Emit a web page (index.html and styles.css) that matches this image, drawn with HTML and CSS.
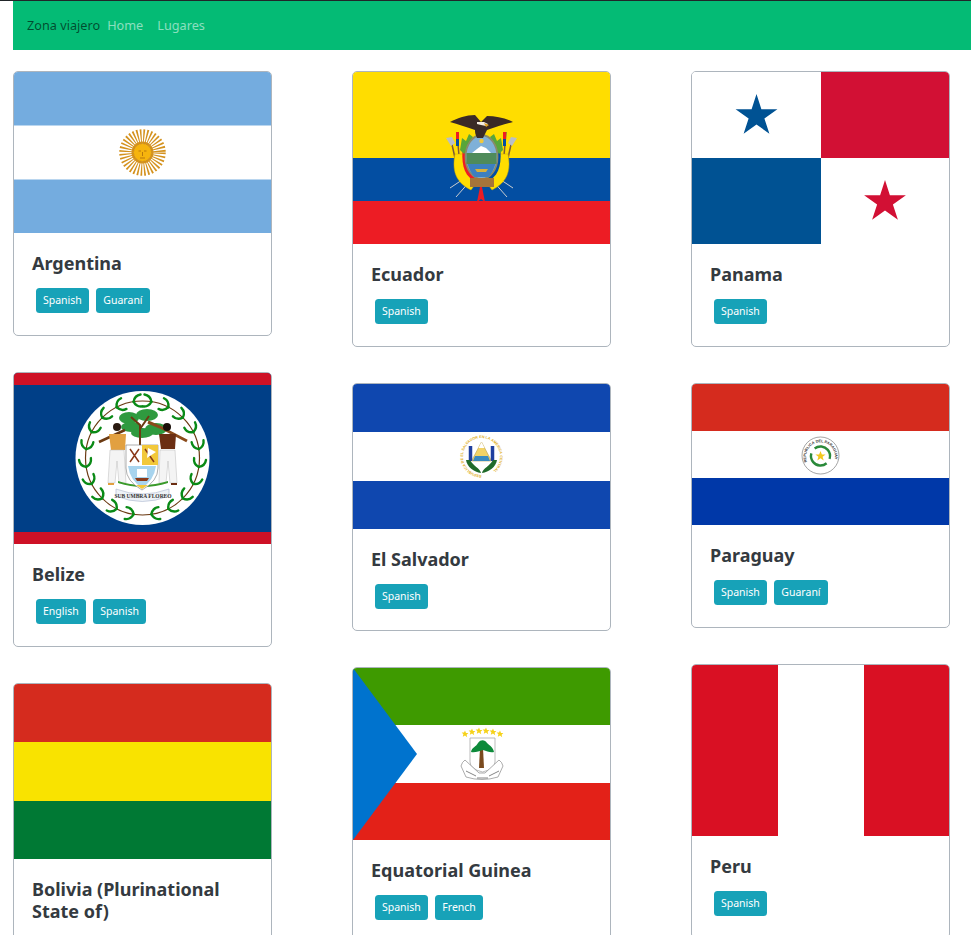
FILE: index.html
```html
<!DOCTYPE html>
<html lang="es">
<head>
    <meta charset="UTF-8">
    <meta name="viewport" content="width=device-width, initial-scale=1.0">
    <title>Zona viajero</title>
    <link rel="stylesheet" href="styles.css">
</head>
<body>
    <nav class="navbar">
        <a href="#" class="brand">Zona viajero</a>
        <a href="#" class="nav-link">Home</a>
        <a href="#" class="nav-link">Lugares</a>
    </nav>

    <main class="country-grid">
        <div class="country-col">
            <!-- Argentina -->
            <div class="card">
                <svg class="flag flag-ar" viewBox="0 0 257 161">
                    <rect width="257" height="161" fill="#74acdf"/>
                    <rect y="53.5" width="257" height="54" fill="#fff"/>
                    <circle cx="128.500" cy="80.500" r="16" fill="none" stroke="#d4921e" stroke-width="14.500" stroke-dasharray="1.300 1.500"/>
                    <circle cx="128.500" cy="80.500" r="10" fill="none" stroke="#d4921e" stroke-width="2"/>
                    <circle cx="128.500" cy="80.500" r="9" fill="#f6b40e" stroke="#c9860f" stroke-width=".7"/>
                    <path d="M124.500 79h2.500M130 79h2.500M128.500 80v4M126 86h5" stroke="#b9790c" stroke-width="1" fill="none"/>
                </svg>
                <div class="card-body">
                    <h5 class="card-title">Argentina</h5>
                    <span class="badge">Spanish</span><span class="badge">Guaraní</span>
                </div>
            </div>

            <!-- Belize -->
            <div class="card">
                <svg class="flag flag-bz" viewBox="0 0 257 171">
                    <defs>
                        <g id="bz-leaf" fill="none" stroke="#0a8a16" stroke-width="2.400" stroke-linecap="round">
                            <path d="M128.500 28q-2-6-8-6"/>
                            <path d="M128.500 28q-2 6-8 6"/>
                        </g>
                        <g id="bz-leaf-l" fill="none" stroke="#0a8a16" stroke-width="2.400" stroke-linecap="round">
                            <path d="M128.500 28q2-6 8-6"/>
                            <path d="M128.500 28q2 6 8 6"/>
                        </g>
                    </defs>
                    <rect width="257" height="171" fill="#003f87"/>
                    <rect width="257" height="12" fill="#ce1126"/>
                    <rect y="159" width="257" height="12" fill="#ce1126"/>
                    <circle cx="128.500" cy="85" r="67" fill="#fff"/>
                    <circle cx="128.500" cy="85" r="57" fill="none" stroke="#6b3a12" stroke-width="1.200"/>
                    <use href="#bz-leaf" transform="rotate(9 128.500 85)"/>
                    <use href="#bz-leaf" transform="rotate(27 128.500 85)"/>
                    <use href="#bz-leaf" transform="rotate(45 128.500 85)"/>
                    <use href="#bz-leaf" transform="rotate(63 128.500 85)"/>
                    <use href="#bz-leaf" transform="rotate(81 128.500 85)"/>
                    <use href="#bz-leaf" transform="rotate(99 128.500 85)"/>
                    <use href="#bz-leaf" transform="rotate(117 128.500 85)"/>
                    <use href="#bz-leaf" transform="rotate(135 128.500 85)"/>
                    <use href="#bz-leaf" transform="rotate(153 128.500 85)"/>
                    <use href="#bz-leaf" transform="rotate(171 128.500 85)"/>
                    <use href="#bz-leaf-l" transform="rotate(189 128.500 85)"/>
                    <use href="#bz-leaf-l" transform="rotate(207 128.500 85)"/>
                    <use href="#bz-leaf-l" transform="rotate(225 128.500 85)"/>
                    <use href="#bz-leaf-l" transform="rotate(243 128.500 85)"/>
                    <use href="#bz-leaf-l" transform="rotate(261 128.500 85)"/>
                    <use href="#bz-leaf-l" transform="rotate(279 128.500 85)"/>
                    <use href="#bz-leaf-l" transform="rotate(297 128.500 85)"/>
                    <use href="#bz-leaf-l" transform="rotate(315 128.500 85)"/>
                    <use href="#bz-leaf-l" transform="rotate(333 128.500 85)"/>
                    <use href="#bz-leaf-l" transform="rotate(351 128.500 85)"/>
                    <!-- tree -->
                    <ellipse cx="115" cy="45" rx="10" ry="6" fill="#2f9a3f"/>
                    <ellipse cx="133" cy="42" rx="11" ry="6" fill="#2f9a3f"/>
                    <ellipse cx="117" cy="54" rx="10" ry="5" fill="#2f9a3f"/>
                    <ellipse cx="142" cy="56" rx="11" ry="6" fill="#2f9a3f"/>
                    <ellipse cx="128" cy="60" rx="11" ry="5" fill="#2f9a3f"/>
                    <path d="M126 72V52l-9-8M126 56l9-13" stroke="#6b3a12" stroke-width="2" fill="none"/>
                    <!-- left man -->
                    <path d="M85 69l26-12" stroke="#6b3a12" stroke-width="2.500"/>
                    <circle cx="103" cy="54" r="4" fill="#2a1a10"/>
                    <path d="M95 61h17l-1 16H97z" fill="#e2a040"/>
                    <path d="M96 77h14l2 33h-7l-2-22-2 22h-7z" fill="#f4f4f4" stroke="#bbb" stroke-width=".5"/>
                    <path d="M94 110h6v2h-6z" fill="#e2a040"/>
                    <!-- right man -->
                    <path d="M134 49l12 5 27 14" stroke="#8a4a1a" stroke-width="3"/>
                    <circle cx="153" cy="54" r="4" fill="#1a0f08"/>
                    <path d="M145 61h17l-1 15h-14z" fill="#6b2e12"/>
                    <path d="M146 77h15l2 33h-7l-2-22-2 22h-7z" fill="#f4f4f4" stroke="#bbb" stroke-width=".5"/>
                    <path d="M157 110h6v2h-6z" fill="#6b2e12"/>
                    <path d="M104 108q24 8 50 0v2q-25 8-50 0z" fill="#3a9a2a"/>
                    <!-- shield -->
                    <path d="M112 72h32v23q0 13-16 22-16-9-16-22z" fill="#fff" stroke="#777" stroke-width=".6"/>
                    <path d="M128 72h16v20h-16z" fill="#f2c83a"/>
                    <path d="M116 76l9 13M125 76l-9 13M131 76l9 13" stroke="#8a3a1a" stroke-width="1.500"/>
                    <path d="M134 75l8 4-9 6z" fill="#fff"/>
                    <path d="M114 93h28q-2 14-14 22-12-8-14-22z" fill="#a8d4ee"/>
                    <path d="M121 105h14l-2 3h-10z" fill="#8a3a1a"/>
                    <path d="M123 96h10v8h-10z" fill="#fff"/>
                    <path d="M122 112h12l-6 4z" fill="#f2c83a"/>
                    <!-- scroll -->
                    <path d="M102 116q26 10 53 0v7q-27 11-53 0z" fill="#eef2f7" stroke="#a8b4cc" stroke-width=".6"/>
                    <text x="129" y="125" class="motto" text-anchor="middle">SUB UMBRA FLOREO</text>
                </svg>
                <div class="card-body">
                    <h5 class="card-title">Belize</h5>
                    <span class="badge">English</span><span class="badge">Spanish</span>
                </div>
            </div>

            <!-- Bolivia -->
            <div class="card">
                <svg class="flag flag-bo" viewBox="0 0 257 175">
                    <rect width="257" height="58.500" fill="#d52b1e"/>
                    <rect y="58" width="257" height="59" fill="#f9e300"/>
                    <rect y="117" width="257" height="58" fill="#007934"/>
                </svg>
                <div class="card-body">
                    <h5 class="card-title">Bolivia (Plurinational State of)</h5>
                    <span class="badge">Spanish</span>
                </div>
            </div>
        </div>

        <div class="country-col">
            <!-- Ecuador -->
            <div class="card">
                <svg class="flag flag-ec" viewBox="0 0 257 172">
                    <rect width="257" height="86" fill="#ffdd00"/>
                    <rect y="86" width="257" height="43" fill="#034ea2"/>
                    <rect y="129" width="257" height="43" fill="#ed1c24"/>
                    <!-- lances -->
                    <path d="M98 68l4 18M104 60l2 24M159 68l-4 18M153 60l-2 24" stroke="#7a5a3a" stroke-width="1.500"/>
                    <path d="M103 60h3v12h-3zM150 60h3v12h-3z" fill="#ed1c24"/>
                    <path d="M103 67h3v7h-3zM150 67h3v7h-3z" fill="#034ea2"/>
                    <path d="M93 66l6-1 3 6-4 3zM164 66l-6-1-3 6 4 3z" fill="#b9bfc6"/>
                    <path d="M118 108l-15 17M112 106l-15 10M139 108l15 17M145 106l15 10" stroke="#c9ccd0" stroke-width="1"/>
                    <!-- side drapes -->
                    <path d="M102 82c-3 16 0 28 16 36l6-8c-9-5-13-14-12-28z" fill="#ffdd00" stroke="#c9a800" stroke-width=".5"/>
                    <path d="M155 82c3 16 0 28-16 36l-6-8c9-5 13-14 12-28z" fill="#ffdd00" stroke="#c9a800" stroke-width=".5"/>
                    <path d="M110 72c-2 18 0 30 10 36l3-3c-7-6-9-16-8-33z" fill="#ed1c24"/>
                    <path d="M147 72c2 18 0 30-10 36l-3-3c7-6 9-16 8-33z" fill="#034ea2"/>
                    <!-- palm and laurel -->
                    <path d="M107 78l2-12 4 3 3-7 4 3-4 9-5 8z" fill="#58a63a"/>
                    <path d="M150 78l-2-12-4 3-3-7-4 3 4 9 5 8z" fill="#58a63a"/>
                    <!-- oval -->
                    <ellipse cx="128.500" cy="85" rx="16" ry="22" fill="#7fb0d8" stroke="#8a8a6a" stroke-width="1.800"/>
                    <path d="M119 81l5-4 4-3 5 2 5 5z" fill="#fff"/>
                    <path d="M113.500 81h30v11h-30z" fill="#4f8b5a"/>
                    <path d="M114.500 92h28q-3 9-7 13h-14q-4-4-7-13z" fill="#3d7fc0"/>
                    <path d="M122 97h13l-2 3h-9z" fill="#d8b13a"/>
                    <circle cx="128.500" cy="69" r="2.200" fill="#f2c83a"/>
                    <!-- fasces and ribbon -->
                    <path d="M117 106h24v9h-24z" fill="#a6743a"/>
                    <path d="M127 115l-3 15 4-3 4 3-3-15z" fill="#ed1c24"/>
                    <!-- condor -->
                    <path d="M97 50c8-4 16-7 25-7l6 7 6-6c9 0 18 2 26 6-8 2-17 5-26 8l-4 8h-6c-2-4-2-6-2-8-9-3-17-6-25-8z" fill="#3a2a26"/>
                    <path d="M124 50h7l4 2-2 2-5-1-4-1z" fill="#f4ece0"/>
                    <path d="M131 51l5 2-3 2z" fill="#e0a020"/>
                </svg>
                <div class="card-body">
                    <h5 class="card-title">Ecuador</h5>
                    <span class="badge">Spanish</span>
                </div>
            </div>

            <!-- El Salvador -->
            <div class="card card-sv">
                <svg class="flag flag-sv" viewBox="0 0 257 145">
                    <defs>
                        <path id="sv-ring" d="M128.500 91a18.500 18.500 0 1 1 .01 0z"/>
                    </defs>
                    <rect width="257" height="145" fill="#0f47af"/>
                    <rect y="48" width="257" height="49" fill="#fff"/>
                    <text class="seal-text seal-sv"><textPath href="#sv-ring">REPUBLICA DE EL SALVADOR EN LA AMERICA CENTRAL</textPath></text>
                    <path d="M128.500 58l10 19h-20z" fill="#f2d265" stroke="#b9a04a" stroke-width=".6"/>
                    <path d="M128.500 58l3 6h-6z" fill="#fff"/>
                    <path d="M122 72h13l2 5h-17z" fill="#3a8ac0"/>
                    <path d="M117.500 62v15M139.500 62v15" stroke="#1f3f9f" stroke-width="3.500"/>
                    <path d="M113 76c1 7 8 12 15 13-1-5-8-7-11-13zM144 76c-1 7-8 12-15 13 1-5 8-7 11-13z" fill="#1f6a2a"/>
                </svg>
                <div class="card-body">
                    <h5 class="card-title">El Salvador</h5>
                    <span class="badge">Spanish</span>
                </div>
            </div>

            <!-- Equatorial Guinea -->
            <div class="card">
                <svg class="flag flag-gq" viewBox="0 0 257 172">
                    <defs>
                        <path id="gq-star" d="M0-3.500l1 2.400 2.400.2-1.800 1.600.6 2.500L0 1.400l-2.200 1.300.6-2.500-1.800-1.600 2.400-.2z" fill="#f6d21a"/>
                    </defs>
                    <rect width="257" height="58" fill="#3e9a00"/>
                    <rect y="57" width="257" height="58" fill="#fff"/>
                    <rect y="115" width="257" height="57" fill="#e32118"/>
                    <path d="M0 0l64 86L0 172z" fill="#0073ce"/>
                    <use href="#gq-star" x="112" y="66"/>
                    <use href="#gq-star" x="119" y="64"/>
                    <use href="#gq-star" x="126" y="63"/>
                    <use href="#gq-star" x="133" y="63"/>
                    <use href="#gq-star" x="140" y="64"/>
                    <use href="#gq-star" x="147" y="66"/>
                    <path d="M117 70h25v24q0 7-12.500 10-12.500-3-12.500-10z" fill="#fff" stroke="#aaa" stroke-width=".8"/>
                    <path d="M126 100l1-20h3l1 20z" fill="#7a4a1e"/>
                    <path d="M118 84c1-5 5-5 7-9 3-4 7-3 9 0 3 3 6 4 7 9-4 1-7-1-11-2-4 1-8 3-12 2z" fill="#0d8a3a"/>
                    <path d="M108 98q1-4 4-6l14 13h6l14-13q3 2 4 6l-5 11q-16 5-32 0z" fill="#fff" stroke="#888" stroke-width=".7"/>
                    <path d="M113 103l10 5M146 103l-10 5M124 110h11" stroke="#666" stroke-width=".8"/>
                </svg>
                <div class="card-body">
                    <h5 class="card-title">Equatorial Guinea</h5>
                    <span class="badge">Spanish</span><span class="badge">French</span>
                </div>
            </div>
        </div>

        <div class="country-col">
            <!-- Panama -->
            <div class="card">
                <svg class="flag flag-pa" viewBox="0 0 257 172">
                    <rect width="257" height="172" fill="#fff"/>
                    <rect x="129" width="128" height="86" fill="#d21034"/>
                    <rect y="86" width="129" height="86" fill="#005293"/>
                    <path d="M64.500 22l4.900 15.200h16l-13 9.400 5 15.200-12.900-9.400-12.900 9.400 5-15.200-13-9.400h16z" fill="#005293"/>
                    <path d="M193 108l4.900 15.200h16l-13 9.400 5 15.200-12.900-9.400-12.900 9.400 5-15.200-13-9.400h16z" fill="#d21034"/>
                </svg>
                <div class="card-body">
                    <h5 class="card-title">Panama</h5>
                    <span class="badge">Spanish</span>
                </div>
            </div>

            <!-- Paraguay -->
            <div class="card">
                <svg class="flag flag-py" viewBox="0 0 257 141">
                    <defs>
                        <path id="py-ring" d="M115 78a14.500 14.500 0 1 1 27 0"/>
                    </defs>
                    <rect width="257" height="47" fill="#d52b1e"/>
                    <rect y="47" width="257" height="47" fill="#fff"/>
                    <rect y="94" width="257" height="47" fill="#0038a8"/>
                    <circle cx="128.500" cy="71.500" r="18.500" fill="#fff" stroke="#666" stroke-width=".6"/>
                    <text class="seal-text seal-py"><textPath href="#py-ring">REPUBLICA DEL PARAGUAY</textPath></text>
                    <circle cx="128.500" cy="72" r="9.500" fill="#fff" stroke="#2a8a3a" stroke-width="2.400" stroke-dasharray="24 6" transform="rotate(50 128.500 72)"/>
                    <path d="M128.500 67l1.400 3.500h3.700l-3 2.300 1.100 3.600-3.200-2.100-3.200 2.100 1.100-3.600-3-2.300h3.700z" fill="#f2c81e"/>
                </svg>
                <div class="card-body">
                    <h5 class="card-title">Paraguay</h5>
                    <span class="badge">Spanish</span><span class="badge">Guaraní</span>
                </div>
            </div>

            <!-- Peru -->
            <div class="card">
                <svg class="flag flag-pe" viewBox="0 0 257 171">
                    <rect width="257" height="171" fill="#d91023"/>
                    <rect x="86" width="86" height="171" fill="#fff"/>
                </svg>
                <div class="card-body">
                    <h5 class="card-title">Peru</h5>
                    <span class="badge">Spanish</span>
                </div>
            </div>
        </div>
    </main>
</body>
</html>
```

FILE: styles.css
```css
html, body {
    height: 100%;
    overflow: hidden;
}
body {
    font-family: "Noto Sans", "Open Sans", sans-serif;
    font-size: 14px;
    line-height: 1.5;
    color: #212529;
    background: #fff;
    margin: 0;
    box-sizing: border-box;
    border-top: 1px solid #212529;
}
.navbar {
    background: #04bb75;
    margin-left: 13px;
    height: 49px;
    padding: 0 14px;
    display: flex;
    align-items: center;
    font-size: 12.700px;
}
.brand {
    color: rgba(0,0,0,0.6);
    text-decoration: none;
    margin-right: 7px;
}
.nav-link {
    color: rgba(255,255,255,0.55);
    text-decoration: none;
    margin-right: 14px;
}
.country-grid {
    display: flex;
    gap: 80px;
    padding: 21px 0 0 13px;
}
.country-col {
    width: 259px;
    display: flex;
    flex-direction: column;
    flex-shrink: 0;
    gap: 36px;
}
.card {
    background: #fff;
    border: 1px solid #adb5bd;
    border-radius: 5px;
    overflow: hidden;
}
.flag {
    display: block;
    width: 100%;
    height: 172px;
}
.flag-ar { height: 161px; }
.flag-bz { height: 171px; }
.flag-bo { height: 175px; }
.flag-sv { height: 145px; }
.flag-py { height: 141px; }
.flag-pe { height: 171px; }
.card-body {
    padding: 19px 18px 22px;
}
.card-sv .card-body {
    padding-bottom: 21px;
}
.card-title {
    margin: 0 0 14px;
    font-size: 18px;
    font-weight: 700;
    line-height: 22px;
    color: #343a40;
}
.badge {
    display: inline-block;
    background: #17a2b8;
    color: #fff;
    font-size: 10.500px;
    line-height: 25px;
    height: 25px;
    padding: 0 7px;
    margin: 0 3.500px 0 4px;
    border-radius: 3.500px;
}
.motto {
    font-size: 5.500px;
    font-family: "Liberation Serif", serif;
    font-weight: 700;
    fill: #333;
}
.seal-text {
    font-family: "Liberation Sans", sans-serif;
    font-weight: 700;
}
.seal-sv {
    font-size: 3.700px;
    fill: #e0ae1e;
}
.seal-py {
    font-size: 3.800px;
    fill: #333;
}
```
